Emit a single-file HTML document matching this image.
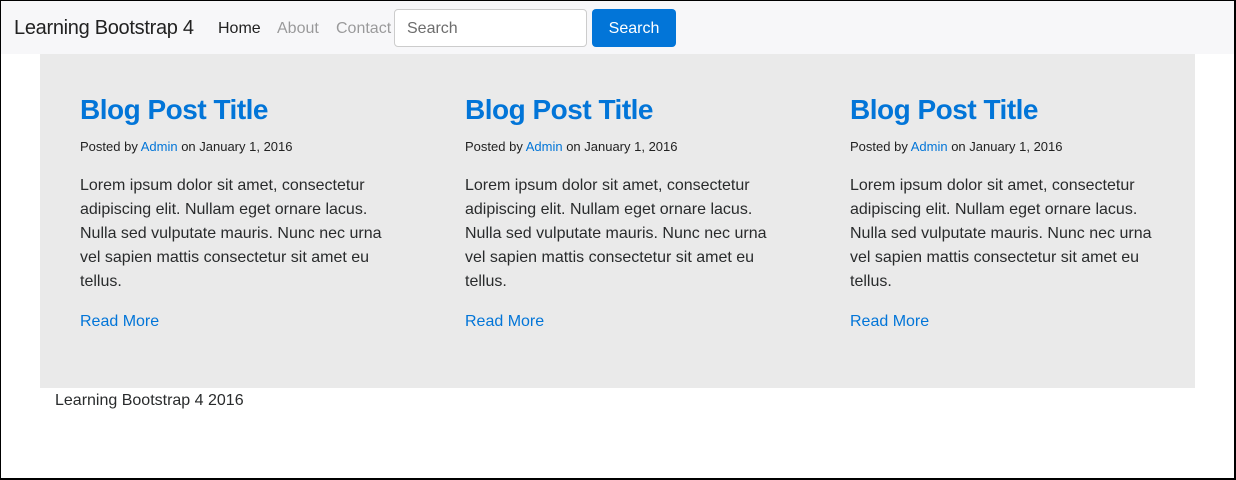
<!DOCTYPE html>
<html><head><style>
*{margin:0;padding:0;box-sizing:border-box}
body{width:1236px;height:480px;overflow:hidden;background:#fff;font-family:"Liberation Sans",Arial,sans-serif;color:#292b2c}
.frame{position:absolute;left:0;top:0;width:1236px;height:480px;border:1px solid #000;border-width:1px 2px 2px 1px}
.nav{position:absolute;left:1px;top:1px;width:1233px;height:53px;background:#f7f7f9}
.a{position:absolute;white-space:nowrap}
.brand{left:13px;top:16px;font-size:20px;color:#222;letter-spacing:-0.3px}
.nl{top:19px;font-size:16px;color:rgba(0,0,0,.38)}
.inp{position:absolute;left:393px;top:8px;width:193px;height:38px;border:1px solid #ccc;border-radius:4px;background:#fff;font-size:16px;color:#6d6d6d;padding:10px 12px}
.btn{position:absolute;left:591px;top:8px;width:84px;height:38px;background:#0275d8;border-radius:4px;color:#fff;font-size:16px;text-align:center;line-height:39px}
.jumbo{position:absolute;left:40px;top:54px;width:1155px;height:334px;background:#eaeaea}
.col{position:absolute;top:55px;width:320px}
.col h2{margin-top:38px;font-size:28px;font-weight:bold;color:#0275d8;line-height:34px;letter-spacing:-0.5px}
.col .m{margin-top:11px;font-size:13px;line-height:18px;color:#222}
.col .m span{color:#0275d8}
.col p.b{margin-top:18px;font-size:16px;line-height:24px;color:#292b2c}
.col .r{margin-top:16px;font-size:16px;line-height:24px;color:#0275d8}
.foot{left:55px;top:392px;font-size:16px;color:#292b2c}
</style></head><body>
<div class="nav">
<div class="a brand">Learning Bootstrap 4</div>
<div class="a nl" style="left:217px;color:#222">Home</div>
<div class="a nl" style="left:276px">About</div>
<div class="a nl" style="left:335px;width:58px;overflow:hidden">Contact</div>
<div class="inp">Search</div>
<div class="btn">Search</div>
</div>
<div class="jumbo"></div>
<div class="col" style="left:80px"><h2>Blog Post Title</h2><div class="m">Posted by <span>Admin</span> on January 1, 2016</div><p class="b">Lorem ipsum dolor sit amet, consectetur adipiscing elit. Nullam eget ornare lacus. Nulla sed vulputate mauris. Nunc nec urna vel sapien mattis consectetur sit amet eu tellus.</p><div class="r">Read More</div></div>
<div class="col" style="left:465px"><h2>Blog Post Title</h2><div class="m">Posted by <span>Admin</span> on January 1, 2016</div><p class="b">Lorem ipsum dolor sit amet, consectetur adipiscing elit. Nullam eget ornare lacus. Nulla sed vulputate mauris. Nunc nec urna vel sapien mattis consectetur sit amet eu tellus.</p><div class="r">Read More</div></div>
<div class="col" style="left:850px"><h2>Blog Post Title</h2><div class="m">Posted by <span>Admin</span> on January 1, 2016</div><p class="b">Lorem ipsum dolor sit amet, consectetur adipiscing elit. Nullam eget ornare lacus. Nulla sed vulputate mauris. Nunc nec urna vel sapien mattis consectetur sit amet eu tellus.</p><div class="r">Read More</div></div>
<div class="a foot">Learning Bootstrap 4 2016</div>
<div class="frame"></div>
</body></html>
